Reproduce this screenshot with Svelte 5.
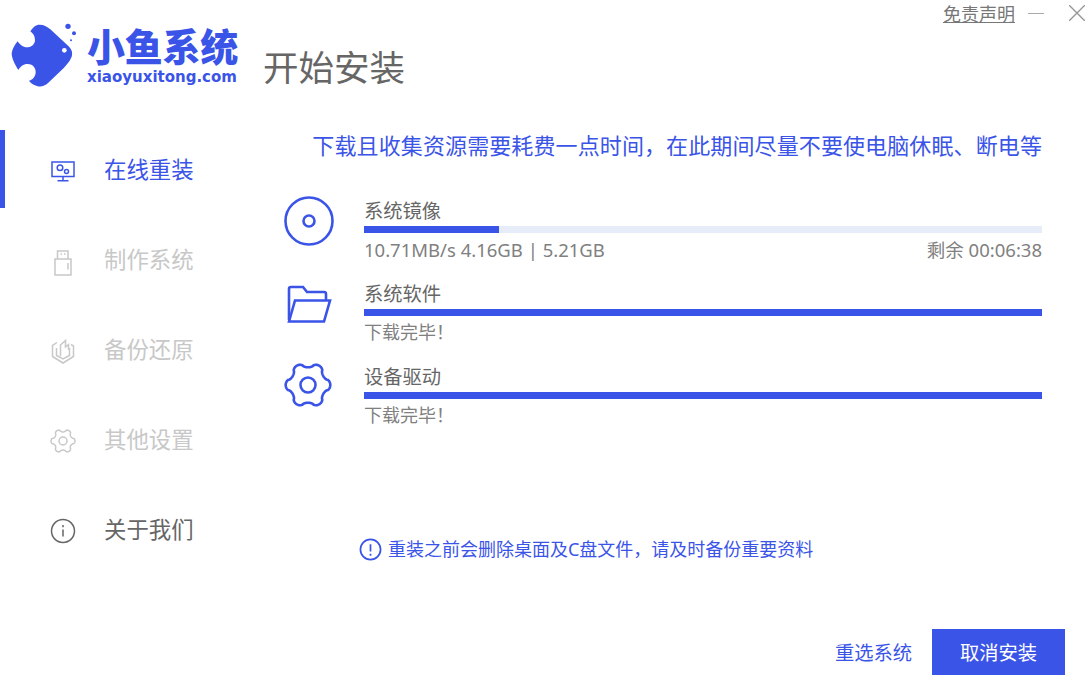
<script>
  const menu = [
    { label: '在线重装', icon: 'monitor', state: 'active' },
    { label: '制作系统', icon: 'usb', state: 'off' },
    { label: '备份还原', icon: 'backup', state: 'off' },
    { label: '其他设置', icon: 'gear', state: 'off' },
    { label: '关于我们', icon: 'info', state: 'on' }
  ];

  const tasks = [
    { name: '系统镜像', icon: 'disc', pct: 19.9, note: '10.71MB/s 4.16GB | 5.21GB', left: '剩余 00:06:38' },
    { name: '系统软件', icon: 'folder', pct: 100, note: '下载完毕！' },
    { name: '设备驱动', icon: 'gear', pct: 100, note: '下载完毕！' }
  ];

  // six rounded teeth, same cog in the sidebar and the task list
  function cog(cx, cy, r, depth) {
    let d = '';
    for (let i = 0; i <= 180; i++) {
      const t = (i / 180) * Math.PI * 2;
      const wave = Math.cos(6 * t);
      const rr = r + depth * Math.sign(wave) * Math.pow(Math.abs(wave), 0.6);
      d += (i ? 'L' : 'M') + (cx + rr * Math.cos(t)).toFixed(2) + ' ' + (cy + rr * Math.sin(t)).toFixed(2);
    }
    return d + 'Z';
  }
</script>

{#snippet glyph(name)}
  {#if name === 'monitor'}
    <svg viewBox="0 0 26 26" width="26" height="26">
      <rect x="2" y="4" width="22" height="14.5" />
      <circle cx="10" cy="9.700" r="2.800" />
      <circle cx="16.500" cy="13.500" r="2" />
      <path d="M13 18.500v4M7.500 22.800h11" />
    </svg>
  {:else if name === 'usb'}
    <svg viewBox="0 0 26 26" width="26" height="26">
      <path d="M5 11h16v16H5zM7.500 11V3h10.500v8M10.500 6h1.500M14 6h1.500M18 15v6.500" />
    </svg>
  {:else if name === 'backup'}
    <svg viewBox="0 0 26 26" width="26" height="26">
      <path d="M7 4.500 2.500 7.500v11L13 25l10.500-6.500V8l-2.500-1.500" />
      <path d="M6.500 10v7.500l6.500 3.500 6.500-3.500V10" />
      <path d="M10.500 18V7L15.500 2.500V9l3-2.500V12" />
    </svg>
  {:else if name === 'gear'}
    <svg viewBox="0 0 26 26" width="26" height="26">
      <path d={cog(13, 13, 10.500, 1.500)} />
      <circle cx="13" cy="13" r="4" />
    </svg>
  {:else if name === 'info'}
    <svg viewBox="0 0 26 26" width="26" height="26">
      <circle cx="13" cy="13" r="11.500" />
      <path class="thick" d="M13 11.500v7M13 7v2.200" />
    </svg>
  {:else if name === 'disc'}
    <svg viewBox="0 0 50 50" width="50" height="50">
      <circle cx="25" cy="25" r="23.500" />
      <circle cx="25" cy="25" r="5.500" />
    </svg>
  {:else if name === 'folder'}
    <svg viewBox="0 0 50 50" width="50" height="50">
      <path d="M5 41V10q0-2 2-2h12l4 5h17q2 0 2 2v6" />
      <path d="M5 42.500l6-21h35l-6 21z" />
    </svg>
  {/if}
{/snippet}

<div class="app">
  <header>
    <div class="logo">
      <svg class="fish" viewBox="0 0 240 216" width="80" height="72">
        <path d="M76 40C84 28 92 20 104 20C116 20 126 26 136 34L190 84C200 94 204 104 200 116C194 132 180 146 166 160L130 194C118 204 108 208 96 204C84 200 76 194 72 188C84 186 92 174 92 162C92 148 82 138 68 138C54 138 46 146 40 156C30 140 20 122 20 106C22 92 30 80 38 70C44 80 54 88 66 88C80 88 90 78 90 66C90 54 84 46 76 40Z" />
        <circle class="eye" cx="178" cy="97" r="7" />
        <circle cx="189" cy="25" r="8" />
        <circle cx="207" cy="46" r="6" />
        <circle cx="198" cy="67" r="3" />
      </svg>
      <div class="logo-text">
        <strong>小鱼系统</strong>
        <span>xiaoyuxitong.com</span>
      </div>
    </div>
    <h1>开始安装</h1>
    <div class="controls">
      <a href="#top">免责声明</a>
      <span class="minimize"></span>
      <svg class="close" viewBox="0 0 16 16" width="16" height="16"><path d="M0 0l16 16M16 0 0 16" /></svg>
    </div>
  </header>

  <div class="body">
    <nav>
      {#each menu as item}
        <div class="nav-item {item.state}">
          <span class="nav-icon">{@render glyph(item.icon)}</span>
          <span class="nav-label">{item.label}</span>
        </div>
      {/each}
    </nav>

    <main>
      <div class="content">
        <p class="lead">下载且收集资源需要耗费一点时间，在此期间尽量不要使电脑休眠、断电等</p>

        <div class="tasks">
          {#each tasks as task}
            <div class="task">
              <span class="task-icon">
                {#if task.icon === 'gear'}
                  <svg viewBox="0 0 50 50" width="50" height="50">
                    <path d={cog(24, 23, 20, 2.300)} />
                    <circle cx="24" cy="23" r="7.500" />
                  </svg>
                {:else}
                  {@render glyph(task.icon)}
                {/if}
              </span>
              <div class="task-info">
                <div class="task-name">{task.name}</div>
                <div class="track"><div class="fill" style="width: {task.pct}%"></div></div>
                <div class="task-note" class:live={task.left}>
                  <span>{task.note}</span>
                  {#if task.left}<span>{task.left}</span>{/if}
                </div>
              </div>
            </div>
          {/each}
        </div>

        <div class="notice">
          <svg viewBox="0 0 24 24" width="23" height="23">
            <circle cx="12" cy="12" r="10.500" />
            <path d="M12 6.500v7.500M12 16.500v2" />
          </svg>
          <span>重装之前会删除桌面及C盘文件，请及时备份重要资料</span>
        </div>
      </div>

      <div class="actions">
        <button class="link">重选系统</button>
        <button class="primary">取消安装</button>
      </div>
    </main>
  </div>
</div>

<style>
  :global(body) {
    margin: 0;
    background: #fff;
  }

  .app {
    width: 1089px;
    height: 692px;
    display: flex;
    flex-direction: column;
    overflow: hidden;
    background: #fff;
    color: #666;
    font-family: "Noto Sans", "Noto Sans CJK SC", sans-serif;
  }

  header {
    height: 126px;
    flex: none;
    display: flex;
    align-items: flex-start;
  }

  .logo {
    display: flex;
    padding: 18px 0 0 5px;
  }

  .fish { fill: #3b54e8; }
  .fish .eye { fill: #fff; }

  .logo-text {
    display: flex;
    flex-direction: column;
    margin: 3px 0 0 2px;
    color: #3b54e8;
  }

  .logo-text strong {
    font-size: 38px;
    line-height: 50px;
    font-weight: 900;
    letter-spacing: -0.25px;
  }

  .logo-text span {
    font-family: "DejaVu Sans", sans-serif;
    font-size: 15px;
    font-weight: 700;
    line-height: 12px;
  }

  h1 {
    margin: 44px 0 0 25px;
    font-size: 35.500px;
    line-height: 46px;
    font-weight: 400;
    color: #666;
  }

  .controls {
    margin-left: auto;
    display: flex;
    align-items: center;
    height: 26px;
    padding-right: 4px;
  }

  .controls a {
    font-size: 18px;
    color: #777;
    text-decoration: underline;
  }

  .minimize {
    width: 16px;
    height: 1px;
    margin-left: 13px;
    background: #aaa;
  }

  .close {
    margin-left: 25px;
    stroke: #999;
    stroke-width: 1.400;
    fill: none;
  }

  .body {
    flex: 1;
    display: flex;
    min-height: 0;
  }

  nav {
    width: 284px;
    flex: none;
  }

  .nav-item {
    position: relative;
    height: 90px;
    display: flex;
    align-items: center;
    padding-left: 50px;
    font-size: 22.400px;
  }

  .nav-label {
    margin-bottom: 6px;
  }

  .nav-icon {
    width: 26px;
    height: 26px;
    margin-right: 28px;
  }

  .nav-icon :global(svg),
  .task-icon :global(svg) {
    display: block;
    fill: none;
    stroke: currentColor;
    overflow: visible;
  }

  .nav-icon :global(svg) { stroke-width: 1.500; }
  .task-icon :global(svg) { stroke-width: 2.600; }

  .nav-item.active { color: #3b54e8; }
  .nav-item.off { color: #c8c8c8; }
  .nav-item.on { color: #666; }

  .nav-item.active::before {
    content: "";
    position: absolute;
    left: 0;
    top: 4px;
    width: 5px;
    height: 78px;
    background: #3b54e8;
  }

  main {
    flex: 1;
    display: flex;
    flex-direction: column;
    padding-right: 24px;
  }

  .content {
    padding-right: 23px;
  }

  .lead {
    margin: 0;
    text-align: right;
    font-size: 22px;
    line-height: 38px;
    letter-spacing: 0.11px;
    color: #3b54e8;
  }

  .tasks {
    margin-top: 32px;
  }

  .task {
    display: flex;
    height: 83px;
  }

  .task-icon {
    width: 50px;
    height: 50px;
    margin-right: 30px;
    color: #3b54e8;
  }

  .task-info {
    flex: 1;
  }

  .task-name {
    font-size: 19.300px;
    line-height: 30px;
    color: #666;
  }

  .track {
    height: 7px;
    background: #e6edf8;
  }

  .fill {
    height: 100%;
    background: #3b54e8;
  }

  .task-note {
    display: flex;
    justify-content: space-between;
    font-size: 18px;
    line-height: 33px;
    color: #808080;
  }

  .task-note.live {
    font-size: 18.500px;
    line-height: 34px;
  }

  .notice {
    display: flex;
    align-items: center;
    gap: 6px;
    margin: 89px 0 0 75px;
    font-size: 18px;
    line-height: 30px;
    color: #3b54e8;
  }

  .notice svg {
    fill: none;
    stroke: #3b54e8;
    stroke-width: 1.800;
  }

  .actions {
    margin-top: auto;
    padding-bottom: 17px;
    display: flex;
    justify-content: flex-end;
    align-items: center;
  }

  button {
    border: 0;
    padding: 0;
    font: inherit;
    font-size: 19.300px;
  }

  .link {
    background: none;
    color: #3b54e8;
    margin-right: 20px;
  }

  .primary {
    width: 133px;
    height: 46px;
    background: #3b54e8;
    color: #fff;
  }
</style>
